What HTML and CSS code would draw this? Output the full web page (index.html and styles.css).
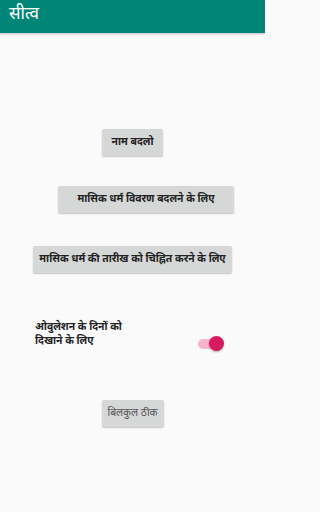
FILE: index.html
```html
<!DOCTYPE html>
<html lang="hi">
<head>
<meta charset="utf-8">
<title>सीत्व</title>
<link rel="stylesheet" href="styles.css">
</head>
<body>
<header class="appbar"><span class="title">सीत्व</span></header>
<main class="content">
  <button class="btn btn-rename">नाम बदलो</button>
  <button class="btn btn-details">मासिक धर्म विवरण बदलने के लिए</button>
  <button class="btn btn-mark">मासिक धर्म की तारीख को चिह्नित करने के लिए</button>
  <div class="toggle-row">
    <span class="toggle-label">ओवुलेशन के दिनों को<br>दिखाने के लिए</span>
    <span class="switch"><span class="track"></span><span class="thumb"></span></span>
  </div>
  <button class="btn btn-ok">बिलकुल ठीक</button>
</main>
</body>
</html>
```
FILE: styles.css
```css
html, body {
  margin: 0;
  padding: 0;
}
body {
  background: #fafafa;
  font-family: "Noto Sans Devanagari", "Lohit Devanagari", "Noto Sans", Roboto, sans-serif;
  width: 265px;
  height: 512px;
  overflow: hidden;
}
.appbar {
  height: 33px;
  background: #008577;
  display: flex;
  align-items: center;
  padding-left: 9px;
  box-shadow: 0 1px 2px rgba(0,0,0,0.25);
  position: relative;
}
.title {
  color: #ffffff;
  font-size: 17px;
  line-height: 1;
  margin-top: -3px;
}
.content {
  display: flex;
  flex-direction: column;
  align-items: center;
  padding-top: 96px;
}
.btn {
  height: 27px;
  border: none;
  border-radius: 2px;
  background: #d6d7d7;
  box-shadow: 0 1px 1.5px rgba(0,0,0,0.22);
  font-family: inherit;
  font-size: 10.4px;
  font-weight: bold;
  color: #222222;
  padding: 0 10px;
  display: flex;
  align-items: center;
  justify-content: center;
  white-space: nowrap;
}
.btn-rename {
  width: 61px;
}
.btn-details {
  width: 176px;
  margin-top: 30px;
  margin-left: 27px;
}
.btn-mark {
  width: 199px;
  margin-top: 33px;
}
.toggle-row {
  align-self: stretch;
  display: flex;
  justify-content: space-between;
  align-items: flex-start;
  padding: 0 41px 0 35px;
  margin-top: 48px;
}
.toggle-label {
  font-size: 10.4px;
  line-height: 14px;
  font-weight: bold;
  color: #222222;
}
.switch {
  position: relative;
  width: 26px;
  height: 15px;
  margin-top: 15px;
}
.track {
  position: absolute;
  left: 0;
  top: 2.5px;
  width: 25px;
  height: 10px;
  border-radius: 5px;
  background: #f3b5cb;
}
.thumb {
  position: absolute;
  right: 0;
  top: 0;
  width: 15px;
  height: 15px;
  border-radius: 50%;
  background: #d81b60;
  box-shadow: 0 1px 2px rgba(0,0,0,0.3);
}
.btn-ok {
  width: 62px;
  margin-top: 49px;
  font-weight: normal;
  color: #555555;
}
```
